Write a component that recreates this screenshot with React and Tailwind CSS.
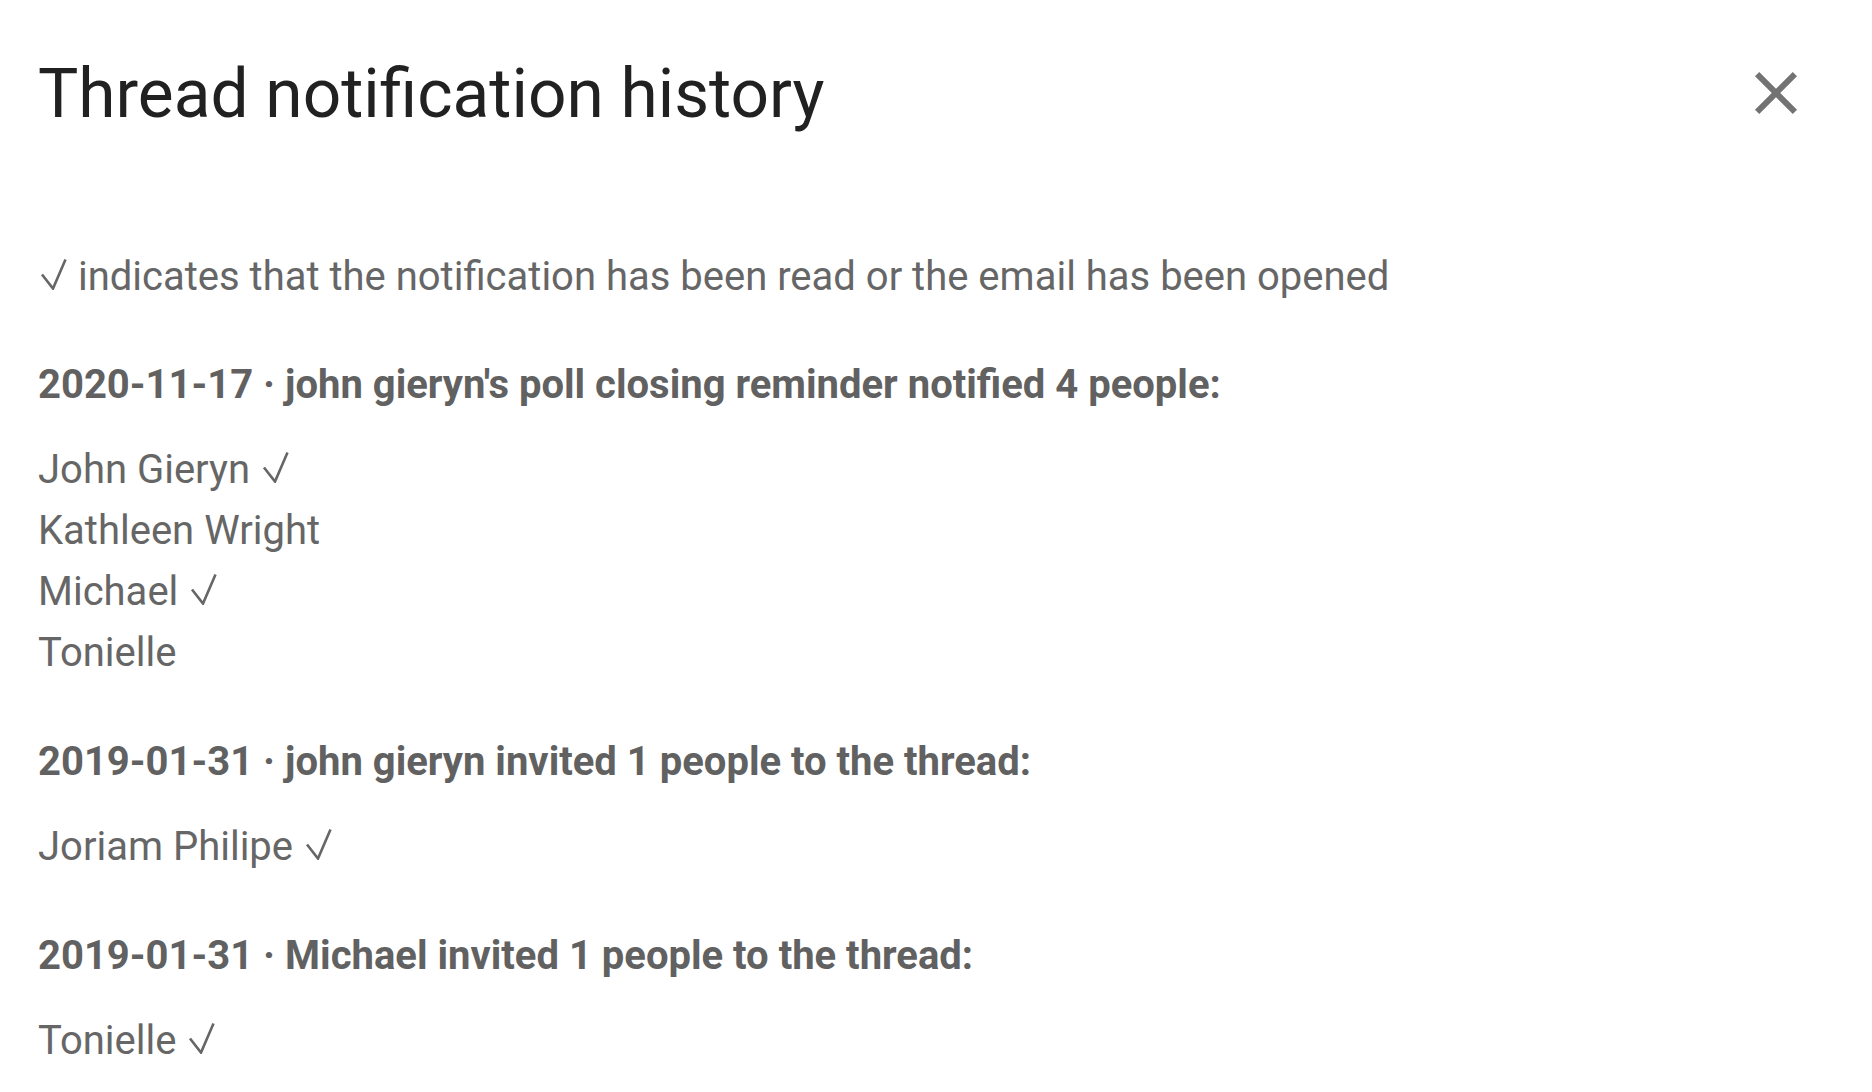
import React from "react";

const groups = [
  {
    title: "2020-11-17 · john gieryn's poll closing reminder notified 4 people:",
    people: [
      { name: "John Gieryn", read: true },
      { name: "Kathleen Wright", read: false },
      { name: "Michael", read: true },
      { name: "Tonielle", read: false },
    ],
  },
  {
    title: "2019-01-31 · john gieryn invited 1 people to the thread:",
    people: [{ name: "Joriam Philipe", read: true }],
  },
  {
    title: "2019-01-31 · Michael invited 1 people to the thread:",
    people: [{ name: "Tonielle", read: true }],
  },
];

// thin check mark, same as the √ glyph in the original
const Tick = () => (
  <svg
    role="img"
    aria-label="√"
    viewBox="0 0 30 32"
    width="30"
    height="32"
    className="inline-block align-baseline"
  >
    <polyline
      points="4,16.5 15,30.6 27.5,1.5"
      fill="none"
      stroke="#666666"
      strokeWidth="2.6"
      strokeLinejoin="miter"
    />
  </svg>
);

const CloseIcon = () => (
  <svg viewBox="0 0 24 24" width="72" height="72" fill="#737373">
    <path d="M19 6.41L17.59 5 12 10.59 6.41 5 5 6.41 10.59 12 5 17.59 6.41 19 12 13.41 17.59 19 19 17.59 13.41 12z" />
  </svg>
);

const App = () => {
  return (
    <div
      className="min-h-screen bg-white pl-[38px] pr-[60px] pt-[54px]"
      style={{ fontFamily: "Roboto, 'Noto Sans', sans-serif" }}
    >
      <div className="flex items-center justify-between">
        <h1 className="text-[67.6px] leading-[80px] font-normal text-[#212121]">
          Thread notification history
        </h1>
        <button className="flex items-center justify-center -mt-[2px]">
          <CloseIcon />
        </button>
      </div>

      <div className="mt-[112px] text-[40px] leading-[61px] text-[#666666]">
        <p className="mb-[47px]">
          <Tick /> indicates that the notification has been read or the email has been opened
        </p>

        {groups.map((g, i) => (
          <div key={i} className="mb-[48px]">
            <p className="font-bold text-[#616161] mb-[24px]">{g.title}</p>
            <ul>
              {g.people.map((p, j) => (
                <li key={j}>
                  {p.name}
                  {p.read && (
                    <>
                      {" "}
                      <Tick />
                    </>
                  )}
                </li>
              ))}
            </ul>
          </div>
        ))}
      </div>
    </div>
  );
};

export default App;
